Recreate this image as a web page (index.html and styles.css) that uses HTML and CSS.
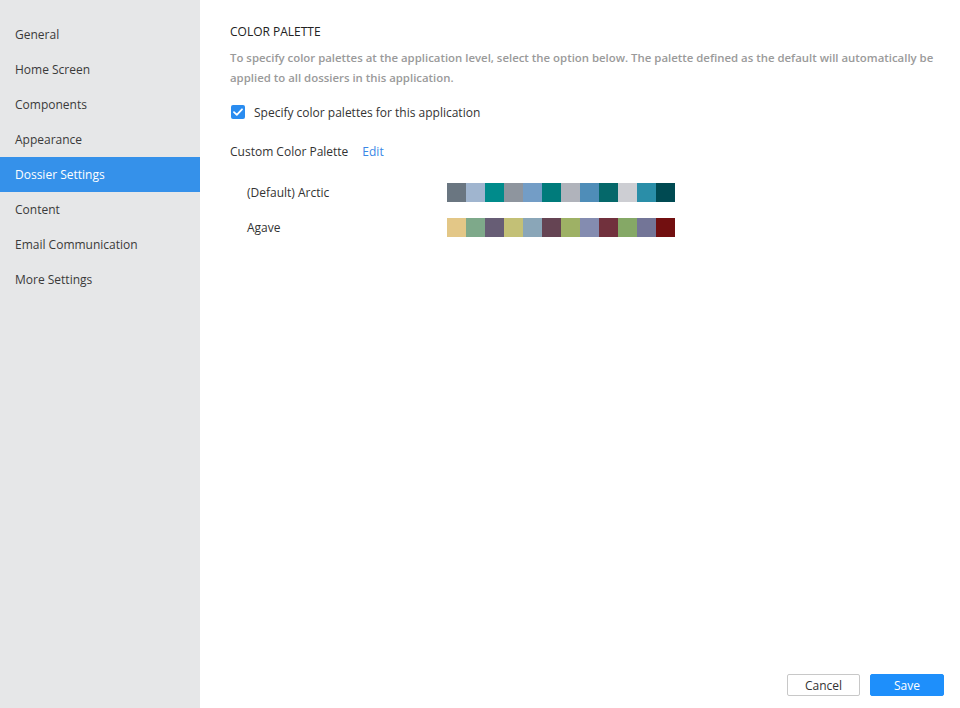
FILE: index.html
```html
<!DOCTYPE html>
<html>
<head>
<meta charset="utf-8">
<link rel="stylesheet" href="styles.css">
</head>
<body>
<div class="app">
  <nav class="sidebar">
    <div class="nav-item">General</div>
    <div class="nav-item">Home Screen</div>
    <div class="nav-item">Components</div>
    <div class="nav-item">Appearance</div>
    <div class="nav-item active">Dossier Settings</div>
    <div class="nav-item">Content</div>
    <div class="nav-item">Email Communication</div>
    <div class="nav-item">More Settings</div>
  </nav>
  <main class="main">
    <div class="content">
      <h1 class="title">COLOR PALETTE</h1>
      <p class="desc">To specify color palettes at the application level, select the option below. The palette defined as the default will automatically be applied to all dossiers in this application.</p>
      <label class="check-row">
        <span class="checkbox"><svg width="10" height="8" viewBox="0 0 10 8"><path d="M1 4.2 L3.8 6.8 L9 1.3" fill="none" stroke="#fff" stroke-width="1.8" stroke-linecap="round" stroke-linejoin="round"/></svg></span>
        <span>Specify color palettes for this application</span>
      </label>
      <div class="custom-row">
        <span>Custom Color Palette</span>
        <span class="edit">Edit</span>
      </div>
      <div class="palettes">
        <div class="palette">
          <span class="pname">(Default) Arctic</span>
          <div class="swatches">
            <i style="background:#6a7681"></i><i style="background:#a0b5cf"></i><i style="background:#008b8b"></i><i style="background:#8e959e"></i><i style="background:#739dc6"></i><i style="background:#007b7b"></i><i style="background:#b0b3bb"></i><i style="background:#4f8db8"></i><i style="background:#05686a"></i><i style="background:#cdced3"></i><i style="background:#2a8ea8"></i><i style="background:#004a52"></i>
          </div>
        </div>
        <div class="palette">
          <span class="pname">Agave</span>
          <div class="swatches">
            <i style="background:#e3c787"></i><i style="background:#7ea98a"></i><i style="background:#675d75"></i><i style="background:#c3c076"></i><i style="background:#8aa6b8"></i><i style="background:#654453"></i><i style="background:#9eb165"></i><i style="background:#848cb0"></i><i style="background:#71313d"></i><i style="background:#85a866"></i><i style="background:#737597"></i><i style="background:#720f10"></i>
          </div>
        </div>
      </div>
    </div>
    <div class="footer">
      <button class="btn cancel">Cancel</button>
      <button class="btn save">Save</button>
    </div>
  </main>
</div>
</body>
</html>
```
FILE: styles.css
```css
* { box-sizing: border-box; }
html, body { margin: 0; height: 100%; }
body {
  font-family: "Open Sans", "Noto Sans", sans-serif;
  font-size: 12px;
  color: #333;
  background: #fff;
}
.app { display: flex; height: 708px; }
.sidebar {
  width: 200px;
  flex: none;
  background: #e6e7e8;
  padding-top: 17px;
}
.nav-item {
  height: 35px;
  line-height: 35px;
  padding-left: 15px;
  color: #3a3a3a;
  font-size: 12px;
}
.nav-item.active { background: #3591ea; color: #fff; }
.main {
  flex: 1;
  display: flex;
  flex-direction: column;
  justify-content: space-between;
  padding: 22px 16px 12px 30px;
}
.title {
  margin: 0;
  font-size: 12px;
  font-weight: 400;
  line-height: 20px;
  color: #222;
}
.desc {
  margin: 6px 0 0;
  color: #9a9a9a;
  font-weight: 600;
  line-height: 20px;
  font-size: 11.4px;
}
.check-row {
  display: flex;
  align-items: center;
  gap: 9px;
  margin-top: 16px;
  height: 16px;
  color: #333;
}
.checkbox {
  width: 14px; height: 14px;
  border-radius: 2px;
  background: #2a8cf0;
  display: flex; align-items: center; justify-content: center;
  margin-left: 1px;
}
.custom-row {
  margin-top: 24px;
  display: flex;
  gap: 14px;
  line-height: 16px;
}
.edit { color: #3a87e6; }
.palettes { margin-top: 23px; padding-left: 17px; display: flex; flex-direction: column; gap: 16px; }
.palette { display: flex; align-items: center; }
.pname { width: 200px; }
.swatches { display: flex; }
.swatches i { display: block; width: 19px; height: 19px; }
.footer { display: flex; justify-content: flex-end; gap: 10px; }
.btn {
  font-family: inherit;
  font-size: 12px;
  height: 22px;
  border-radius: 2px;
  padding: 0;
}
.cancel { width: 73px; background: #fff; border: 1px solid #c8c8c8; color: #333; }
.save { width: 74px; background: #1e8ffb; border: 1px solid #1e8ffb; color: #fff; }
```
